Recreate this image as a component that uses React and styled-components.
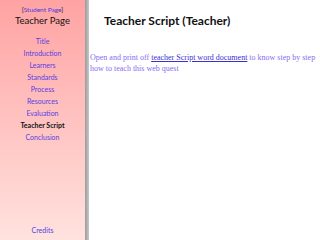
import React from "react";
import styled, { createGlobalStyle } from "styled-components";

const GlobalStyle = createGlobalStyle`
  html, body {
    margin: 0;
    padding: 0;
    background: #fff;
  }
  #root {
    height: 240px;
  }
`;

const Page = styled.div`
  display: flex;
  width: 320px;
  height: 240px;
  overflow: hidden;
`;

const Sidebar = styled.nav`
  width: 85px;
  height: 100%;
  display: flex;
  flex-direction: column;
  align-items: center;
  background: linear-gradient(#ffa3a3, #ffe2de);
  font-family: Lato, "Liberation Sans", sans-serif;
  padding: 6px 0 4px;
  box-sizing: border-box;
`;

const Divider = styled.div`
  width: 4px;
  height: 100%;
  background: linear-gradient(90deg, #9a9a9a, #c8c8c8);
`;

const StudentLink = styled.div`
  font-size: 6.5px;
  color: #222;
  a {
    color: #4a3adf;
    text-decoration: none;
  }
`;

const SideTitle = styled.div`
  font-size: 9.5px;
  color: #111;
  margin-top: 2px;
  margin-bottom: 9px;
`;

const NavItem = styled.a`
  font-size: 7px;
  line-height: 12px;
  color: ${(p) => (p.$active ? "#111" : "#5a3ee0")};
  font-weight: ${(p) => (p.$active ? 700 : 400)};
  text-decoration: none;
`;

const Bottom = styled(NavItem)`
  margin-top: auto;
`;

const Main = styled.main`
  flex: 1;
  padding: 13px 0 0 1px;
`;

const Heading = styled.h1`
  margin: 0 0 0 14px;
  font-family: Lato, "Liberation Sans", sans-serif;
  font-size: 12px;
  font-weight: 700;
  color: #111;
`;

const Body = styled.p`
  margin: 24px 0 0;
  font-family: "Liberation Serif", serif;
  font-size: 8px;
  line-height: 11px;
  color: #8a6cf0;
  a {
    color: #3a2fd0;
    text-decoration: underline;
  }
`;

const links = [
  "Title",
  "Introduction",
  "Learners",
  "Standards",
  "Process",
  "Resources",
  "Evaluation",
  "Teacher Script",
  "Conclusion",
];

export default function App() {
  return (
    <>
      <GlobalStyle />
      <Page>
        <Sidebar>
          <StudentLink>
            [<a href="#">Student Page</a>]
          </StudentLink>
          <SideTitle>Teacher Page</SideTitle>
          {links.map((l) => (
            <NavItem key={l} href="#" $active={l === "Teacher Script"}>
              {l}
            </NavItem>
          ))}
          <Bottom href="#">Credits</Bottom>
        </Sidebar>
        <Divider />
        <Main>
          <Heading>Teacher Script (Teacher)</Heading>
          <Body>
            Open and print off <a href="#">teacher Script word document</a> to
            know step by step how to teach this web quest
          </Body>
        </Main>
      </Page>
    </>
  );
}
